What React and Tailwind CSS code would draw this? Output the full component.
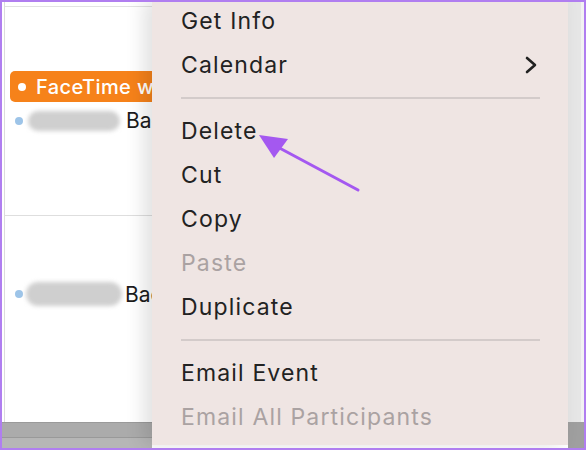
import React from 'react';

const menu = [
  { label: 'Get Info' },
  { label: 'Calendar', sub: true },
  { sep: true },
  { label: 'Delete' },
  { label: 'Cut' },
  { label: 'Copy' },
  { label: 'Paste', disabled: true },
  { label: 'Duplicate' },
  { sep: true },
  { label: 'Email Event' },
  { label: 'Email All Participants', disabled: true },
];

const App = () => {
  return (
    <div
      className="relative w-[586px] h-[450px] overflow-hidden border-2 border-[#b07ef0] bg-white flex"
      style={{ fontFamily: 'Inter, "Noto Sans", sans-serif' }}
    >
      {/* calendar behind the menu */}
      <div className="w-[150px] shrink-0 h-full flex flex-col overflow-hidden">
        <div className="flex-1 ml-[2px] border-l border-[#dcdcdc] flex flex-col">
          <div className="h-[5px] border-b border-[#e2e2e2]" />
          <div className="h-[208px] relative">
            <div className="mt-[64px] ml-[5px] w-[200px] shrink-0 h-[31px] rounded-[5px] bg-[#f6821a] flex items-center text-white text-[20px] font-medium tracking-[0.02em] whitespace-nowrap">
              <span className="w-[8px] h-[8px] shrink-0 rounded-full bg-white ml-[8px] mr-[10px]" />
              FaceTime with
            </div>
            <div className="mt-[8px] ml-[10px] flex items-center whitespace-nowrap">
              <span className="w-[8px] h-[8px] shrink-0 rounded-full bg-[#9dc4e8]" />
              <span className="ml-[5px] w-[92px] h-[20px] shrink-0 rounded-full bg-[#cfcfcf] blur-[2px]" />
              <span className="ml-[6px] text-[21px] text-[#1c1c1c] leading-none">Back</span>
            </div>
          </div>
          <div className="border-t border-[#dedede] flex-1 flex flex-col">
            <div className="mt-[66px] ml-[10px] flex items-center whitespace-nowrap">
              <span className="w-[8px] h-[8px] shrink-0 rounded-full bg-[#9dc4e8]" />
              <span className="ml-[3px] w-[96px] h-[24px] shrink-0 rounded-full bg-[#cfcfcf] blur-[2px]" />
              <span className="ml-[3px] text-[21px] text-[#1c1c1c] leading-none">Back</span>
            </div>
          </div>
        </div>
        <div className="h-[26px] bg-[#ababab] border-t border-[#9a9a9a] flex flex-col">
          <div className="h-[14px]" />
          <div className="flex-1 bg-[#b6b6b6] border-t border-[#999]" />
        </div>
      </div>

      {/* context menu */}
      <div className="w-[416px] shrink-0 h-full bg-[#efe5e3] shadow-[-8px_0_18px_rgba(0,0,0,0.12)] z-10 pl-[29px] pr-[28px] -mt-[3px]">
        {menu.map((m, i) =>
          m.sep ? (
            <div key={i} className="h-[22px] flex items-center">
              <div className="w-full h-[2px] bg-[#d3cbca]" />
            </div>
          ) : (
            <div
              key={i}
              className={`h-[44px] flex items-center justify-between text-[23px] tracking-[0.05em] ${m.disabled ? 'text-[#aaa2a2]' : 'text-[#222]'}`}
            >
              <span className="whitespace-nowrap">{m.label}</span>
              {m.sub && (
                <svg width="14" height="18" viewBox="0 0 14 18" className="mr-[2px]">
                  <path d="M3 2 L11 9 L3 16" fill="none" stroke="#222" strokeWidth="2.6" strokeLinecap="round" strokeLinejoin="round" />
                </svg>
              )}
            </div>
          )
        )}
      </div>

      {/* right strip */}
      <div className="flex-1 h-full flex flex-col">
        <div className="flex-1 flex bg-[#e6e6e6]">
          <div className="flex-1" />
          <div className="w-[3px] bg-[#f2f2f2]" />
        </div>
        <div className="h-[26px] bg-[#9f9f9f]" />
      </div>

      {/* annotation arrow */}
      <svg className="absolute left-0 top-0 pointer-events-none z-20" width="586" height="450">
        <line x1="356" y1="188" x2="270" y2="142" stroke="#a458f0" strokeWidth="3" strokeLinecap="round" />
        <polygon points="257,133 286,137 272,156" fill="#a458f0" />
      </svg>
    </div>
  );
};

export default App;
